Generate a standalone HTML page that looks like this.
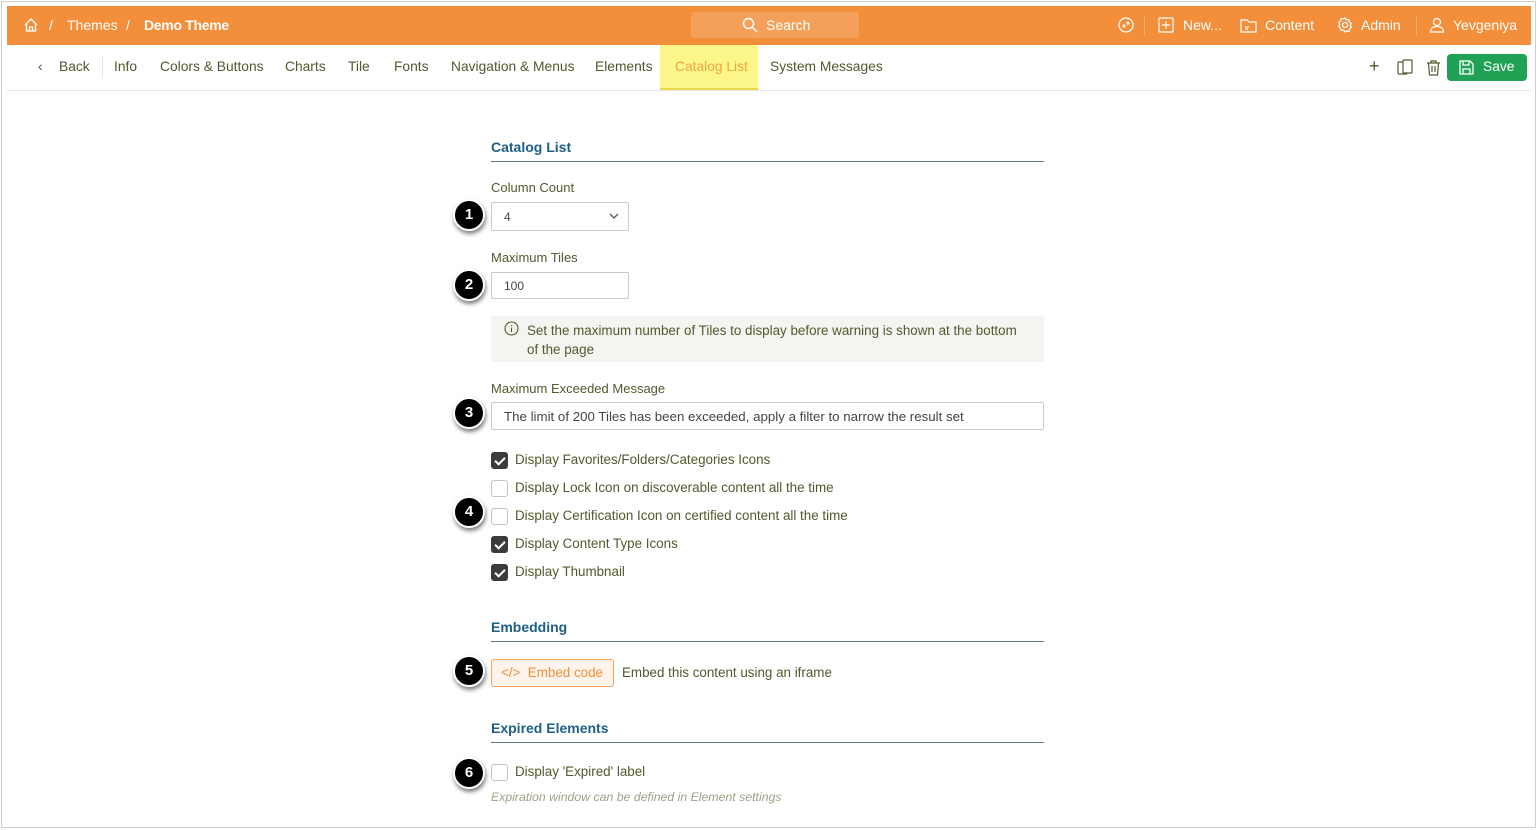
<!DOCTYPE html>
<html><head><meta charset="utf-8"><style>
*{box-sizing:border-box;margin:0;padding:0}
body{width:1538px;height:830px;background:#fff;font-family:"Liberation Sans",sans-serif;color:#4f5a2e;position:relative;overflow:hidden}
.frame{position:absolute;left:1px;top:1px;width:1535px;height:827px;border:1px solid #cfcfcf}
.top{position:absolute;left:7px;top:6px;width:1524px;height:39px;background:#f38f3a;color:#fff;font-size:14px}
.top span{position:absolute;top:11px}
.search{position:absolute;left:684px;top:6px;width:168px;height:26px;background:#f5a05a;border-radius:3px}
.nav{position:absolute;left:7px;top:45px;width:1524px;height:46px;border-bottom:1px solid #e6e6e6;font-size:13.8px}
.nav span{position:absolute;top:14px}
.act{position:absolute;left:653px;top:0;width:98px;height:45px;background:#fdf68a;border-bottom:2px solid #e8d84a}
.save{position:absolute;left:1440px;top:9px;width:80px;height:27px;background:#1fa253;border-radius:4px;color:#fff}
.h{position:absolute;left:491px;width:553px;border-bottom:1px solid #5c7a8c;color:#1d5f86;font-weight:bold;font-size:14px;padding-bottom:6px}
.l{position:absolute;left:491px;font-size:13px}
.box{position:absolute;left:491px;border:1px solid #c9ccc0;border-radius:2px;font-size:12px;color:#444;padding-left:12px}
.cb{position:absolute;left:491px;width:17px;height:17px;border:1px solid #c3c3c3;border-radius:3px}
.cb.on{background:#3c3c3c;border-color:#3c3c3c}
.cb.on:after{content:"";position:absolute;left:5px;top:2px;width:4px;height:8px;border:solid #fff;border-width:0 2px 2px 0;transform:rotate(45deg)}
.ct{position:absolute;left:515px;font-size:13.4px}
.n{position:absolute;left:453px;width:32px;height:32px;border-radius:50%;background:#000;color:#fff;border:2px solid #fff;box-shadow:1px 3px 4px rgba(0,0,0,.5);font-weight:bold;font-size:15px;text-align:center;line-height:28px}
</style></head><body>
<div class="frame"></div>
<div class="top">
<svg style="position:absolute;left:16px;top:11px" width="16" height="16" viewBox="0 0 16 16" fill="none" stroke="#fff" stroke-width="1.3"><path d="M2 8L8 2l6 6M3.5 6.5V14h9V6.5M6.5 14v-4h3v4"/></svg>
<span style="left:42px">/</span><span style="left:60px">Themes</span><span style="left:119px">/</span><span style="left:137px;font-weight:bold;letter-spacing:-.3px">Demo Theme</span>
<div class="search"></div>
<svg style="position:absolute;left:735px;top:11px" width="16" height="16" viewBox="0 0 16 16" fill="none" stroke="#fff" stroke-width="1.4"><circle cx="6.5" cy="6.5" r="5"/><path d="M10 10l5 5"/></svg>
<span style="left:759px">Search</span>
<svg style="position:absolute;left:1111px;top:11px" width="16" height="16" viewBox="0 0 16 16" fill="none" stroke="#fff" stroke-width="1.2"><circle cx="8" cy="8" r="7"/><circle cx="6" cy="9" r="1"/><circle cx="10" cy="6" r="1"/></svg>
<div style="position:absolute;left:1137px;top:10px;width:1px;height:19px;background:#f7b276"></div>
<svg style="position:absolute;left:1151px;top:11px" width="16" height="16" viewBox="0 0 16 16" fill="none" stroke="#fff" stroke-width="1.2"><rect x="1" y="1" width="14" height="14" rx="1"/><path d="M8 4v8M4 8h8"/></svg>
<span style="left:1176px">New...</span>
<svg style="position:absolute;left:1233px;top:11px" width="17" height="16" viewBox="0 0 17 16" fill="none" stroke="#fff" stroke-width="1.2"><path d="M1 3h6l2 2h7v10H1z M5 10h4M5 12h3"/></svg>
<span style="left:1258px">Content</span>
<svg style="position:absolute;left:1330px;top:11px" width="16" height="16" viewBox="0 0 16 16" fill="none" stroke="#fff" stroke-width="1.2"><circle cx="8" cy="8" r="2.5"/><path d="M8 1l1.5 2 2.5-.5.5 2.5 2 1.5-1.5 2 1.5 2-2 1.5-.5 2.5-2.5-.5L8 15l-1.5-2-2.5.5-.5-2.5-2-1.5 1.5-2-1.5-2 2-1.5.5-2.5 2.5.5z"/></svg>
<span style="left:1354px">Admin</span>
<div style="position:absolute;left:1409px;top:10px;width:1px;height:19px;background:#f7b276"></div>
<svg style="position:absolute;left:1422px;top:11px" width="16" height="16" viewBox="0 0 16 16" fill="none" stroke="#fff" stroke-width="1.2"><circle cx="8" cy="5" r="3.5"/><path d="M1.5 15c0-4 3-5.5 6.5-5.5s6.5 1.5 6.5 5.5z"/></svg>
<span style="left:1446px">Yevgeniya</span>
</div>
<div class="nav">
<div class="act"></div>
<span style="left:31px">‹</span><span style="left:52px">Back</span>
<div style="position:absolute;left:95px;top:12px;width:1px;height:20px;background:#e2e2e2"></div>
<span style="left:107px">Info</span><span style="left:153px">Colors &amp; Buttons</span><span style="left:278px">Charts</span><span style="left:341px">Tile</span><span style="left:387px">Fonts</span><span style="left:444px">Navigation &amp; Menus</span><span style="left:588px">Elements</span><span style="left:668px;color:#f0a63c">Catalog List</span><span style="left:763px">System Messages</span>
<span style="left:1362px;font-size:18px;top:11px">+</span>
<svg style="position:absolute;left:1390px;top:14px" width="16" height="17" viewBox="0 0 16 17" fill="none" stroke="#4f5a2e" stroke-width="1.2"><rect x="1" y="3" width="9" height="12" rx="1"/><rect x="6" y="1" width="9" height="13" rx="1" fill="#fff"/></svg>
<svg style="position:absolute;left:1419px;top:14px" width="15" height="17" viewBox="0 0 15 17" fill="none" stroke="#4f5a2e" stroke-width="1.2"><path d="M1 4h13M5 4V2h5v2M2.5 4l1 12h8l1-12M6 7v6M9 7v6"/></svg>
<div class="save"><svg style="position:absolute;left:12px;top:6px" width="15" height="15" viewBox="0 0 15 15" fill="none" stroke="#fff" stroke-width="1.3"><path d="M1 1h10l3 3v10H1z M4 1v4h6V1 M4 14v-5h7v5"/></svg><span style="left:36px;top:5px;position:absolute">Save</span></div>
</div>

<div class="h" style="top:139px">Catalog List</div>
<div class="l" style="top:180px">Column Count</div>
<div class="n" style="top:199px">1</div>
<div class="box" style="top:202px;width:138px;height:29px;line-height:28px">4<svg style="position:absolute;right:9px;top:10px" width="10" height="7" viewBox="0 0 10 7" fill="none" stroke="#555" stroke-width="1.3"><path d="M1 1l4 4 4-4"/></svg></div>
<div class="l" style="top:250px">Maximum Tiles</div>
<div class="n" style="top:269px">2</div>
<div class="box" style="top:272px;width:138px;height:27px;line-height:26px">100</div>
<div style="position:absolute;left:491px;top:316px;width:553px;height:46px;background:#f4f5f1"></div>
<svg style="position:absolute;left:504px;top:321px" width="15" height="15" viewBox="0 0 15 15" fill="none" stroke="#4f5a2e" stroke-width="1.1"><circle cx="7.5" cy="7.5" r="6.5"/><path d="M7.5 6.5v4.5M7.5 4v1"/></svg>
<div class="l" style="left:527px;top:321px;width:500px;line-height:19px;font-size:13.4px">Set the maximum number of Tiles to display before warning is shown at the bottom of the page</div>
<div class="l" style="top:381px">Maximum Exceeded Message</div>
<div class="n" style="top:397px">3</div>
<div class="box" style="top:402px;width:553px;height:28px;line-height:27px;font-size:13.3px">The limit of 200 Tiles has been exceeded, apply a filter to narrow the result set</div>

<div class="cb on" style="top:452px"></div><div class="ct" style="top:452px">Display Favorites/Folders/Categories Icons</div>
<div class="cb" style="top:480px"></div><div class="ct" style="top:480px">Display Lock Icon on discoverable content all the time</div>
<div class="n" style="top:496px">4</div>
<div class="cb" style="top:508px"></div><div class="ct" style="top:508px">Display Certification Icon on certified content all the time</div>
<div class="cb on" style="top:536px"></div><div class="ct" style="top:536px">Display Content Type Icons</div>
<div class="cb on" style="top:564px"></div><div class="ct" style="top:564px">Display Thumbnail</div>

<div class="h" style="top:619px">Embedding</div>
<div class="n" style="top:655px">5</div>
<div style="position:absolute;left:491px;top:659px;width:123px;height:28px;border:1px solid #f6a35e;border-radius:3px;background:#fff4ec;color:#f38f3a;font-size:13.4px;line-height:26px;padding-left:9px">&lt;/&gt;&nbsp; Embed code</div>
<div class="ct" style="left:622px;top:665px">Embed this content using an iframe</div>

<div class="h" style="top:720px">Expired Elements</div>
<div class="n" style="top:757px">6</div>
<div class="cb" style="top:764px"></div><div class="ct" style="top:764px">Display 'Expired' label</div>
<div class="l" style="top:790px;font-style:italic;font-size:12.3px;color:#9aa486">Expiration window can be defined in Element settings</div>
</body></html>
